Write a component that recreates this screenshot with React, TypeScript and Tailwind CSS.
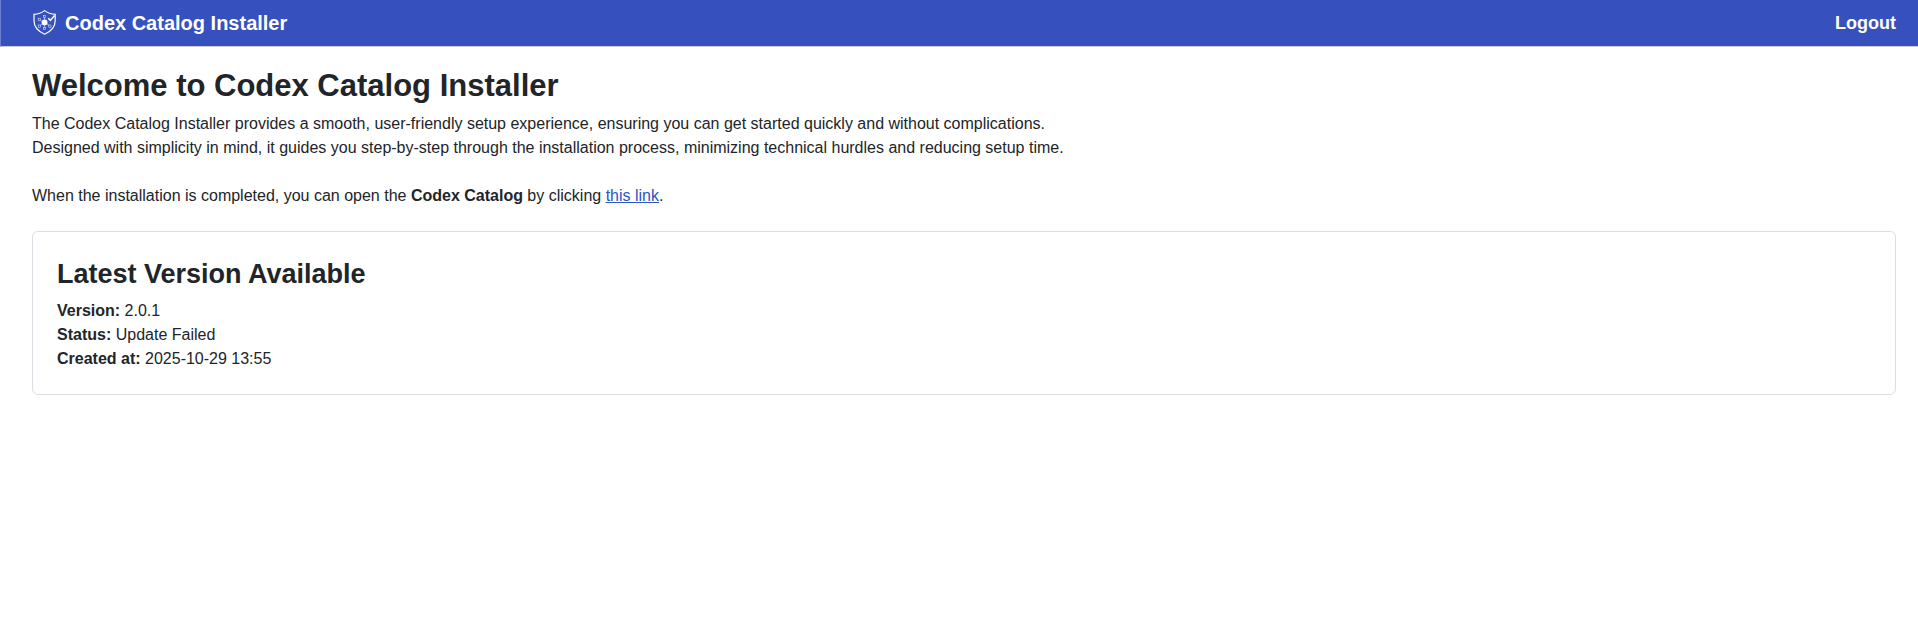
const release = {
  version: '2.0.1',
  status: 'Update Failed',
  createdAt: '2025-10-29 13:55',
}

function ShieldLogo() {
  return (
    <svg
      className="w-[25px] h-7 shrink-0"
      viewBox="0 0 25 28"
      fill="none"
      stroke="white"
      aria-hidden="true"
    >
      <path
        d="M12.6 1.6C9.8 3.8 6.2 5.2 2 5.4V11.5C2 17.8 6.2 22.4 12.6 25.2C19 22.4 23.2 17.8 23.2 11.5V5.4C19 5.2 15.4 3.8 12.6 1.6Z"
        strokeWidth="1.2"
      />
      <circle cx="12.6" cy="13.4" r="2.9" fill="white" stroke="none" />
      {/* circuit traces around the core */}
      <path
        d="M12.6 11V8.4M12.6 16V18.6M10.2 12.4L8.4 11.2M10.2 14.8L8.2 16.4M15 14.8L17 16.4"
        strokeWidth="0.7"
        strokeOpacity="0.8"
      />
      <g strokeWidth="0.6" strokeOpacity="0.8">
        <rect x="11.6" y="6.4" width="2" height="2" />
        <rect x="11.6" y="18.6" width="2" height="2" />
        <rect x="6.2" y="9.3" width="2.2" height="2.2" />
        <rect x="6.2" y="16" width="2.2" height="2.2" />
        <rect x="16.8" y="16" width="2.2" height="2.2" />
      </g>
      <path d="M16.2 9.2L18.4 11.4L22.6 6.4" strokeWidth="1.5" />
    </svg>
  )
}

function Header() {
  return (
    <header className="flex items-center justify-between h-[47px] pl-[31px] pr-[22px] bg-[#3650be] border-b border-l border-b-[#cccccc] border-l-[#6c7fd0] text-white font-bold">
      <a href="/" className="flex items-center gap-2 text-xl leading-6">
        <ShieldLogo />
        Codex Catalog Installer
      </a>
      <button type="button" className="text-lg leading-6 font-bold">
        Logout
      </button>
    </header>
  )
}

function VersionCard() {
  return (
    <section className="mt-[23px] px-6 pt-[25px] pb-[23px] border border-[#dcdee3] rounded-md">
      <h2 className="mb-2 text-[27px] leading-[34px] font-bold">Latest Version Available</h2>
      <p>
        <strong>Version:</strong> {release.version}
      </p>
      <p>
        <strong>Status:</strong> {release.status}
      </p>
      <p>
        <strong>Created at:</strong> {release.createdAt}
      </p>
    </section>
  )
}

export default function App() {
  return (
    <div className="min-h-screen bg-white font-['Liberation_Sans',Arial,sans-serif] text-base leading-6 text-[#212529]">
      <Header />
      <main className="pl-8 pr-[22px] pt-[19px] pb-6">
        <h1 className="mb-1.5 text-[31px] leading-10 font-bold">
          Welcome to Codex Catalog Installer
        </h1>
        <p>
          The Codex Catalog Installer provides a smooth, user-friendly setup experience, ensuring
          you can get started quickly and without complications.
          <br />
          Designed with simplicity in mind, it guides you step-by-step through the installation
          process, minimizing technical hurdles and reducing setup time.
        </p>
        <p className="mt-6">
          When the installation is completed, you can open the <strong>Codex Catalog</strong> by
          clicking{' '}
          <a href="/catalog" className="text-[#2a56c6] underline">
            this link
          </a>
          .
        </p>
        <VersionCard />
      </main>
    </div>
  )
}
